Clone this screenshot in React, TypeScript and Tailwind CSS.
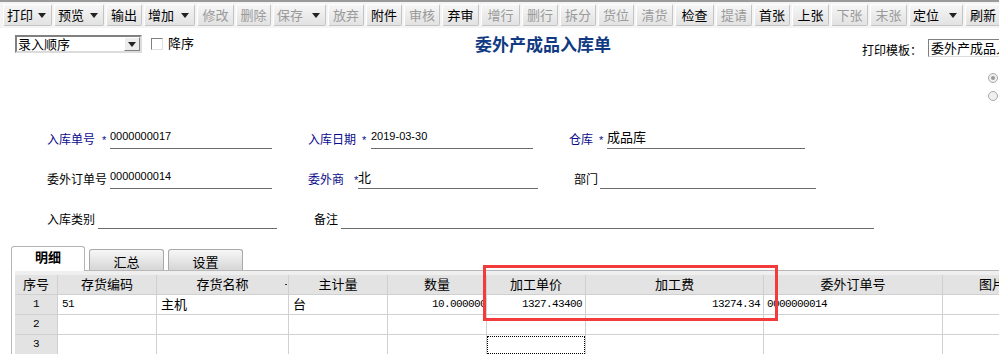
import React from 'react';

const cjk = "font-['Liberation_Sans','Noto_Sans_CJK_SC',sans-serif]";
const mono = "font-['Liberation_Mono','Noto_Sans_CJK_SC',monospace]";

type Btn = { label: string; w: string; drop?: boolean; off?: boolean };

const buttons: Btn[] = [
  { label: '打印', w: 'w-[49px]', drop: true },
  { label: '预览', w: 'w-[50px]', drop: true },
  { label: '输出', w: 'w-[36px]' },
  { label: '增加', w: 'w-[51px]', drop: true },
  { label: '修改', w: 'w-[37px]', off: true },
  { label: '删除', w: 'w-[35px]', off: true },
  { label: '保存', w: 'w-[53px]', drop: true, off: true },
  { label: '放弃', w: 'w-[36px]', off: true },
  { label: '附件', w: 'w-[36px]' },
  { label: '审核', w: 'w-[36px]', off: true },
  { label: '弃审', w: 'w-[37px]' },
  { label: '增行', w: 'w-[39px]', off: true },
  { label: '删行', w: 'w-[36px]', off: true },
  { label: '拆分', w: 'w-[36px]', off: true },
  { label: '货位', w: 'w-[36px]', off: true },
  { label: '清货', w: 'w-[37px]', off: true },
  { label: '检查', w: 'w-[39px]' },
  { label: '提请', w: 'w-[36px]', off: true },
  { label: '首张', w: 'w-[36px]' },
  { label: '上张', w: 'w-[37px]' },
  { label: '下张', w: 'w-[37px]', off: true },
  { label: '末张', w: 'w-[37px]', off: true },
  { label: '定位', w: 'w-[54px]', drop: true },
  { label: '刷新', w: 'w-[36px]' },
];

const columns = [
  { title: '序号', w: 'w-[43px]' },
  { title: '存货编码', w: 'w-[99px]' },
  { title: '存货名称', w: 'w-[132px]' },
  { title: '主计量', w: 'w-[99px]' },
  { title: '数量', w: 'w-[99px]' },
  { title: '加工单价', w: 'w-[99px]' },
  { title: '加工费', w: 'w-[178px]' },
  { title: '委外订单号', w: 'w-[179px]' },
  { title: '图片', w: 'w-[99px]' },
];

function Caret() {
  return <span className="inline-block w-0 h-0 border-l-[4px] border-r-[4px] border-t-[5px] border-l-transparent border-r-transparent border-t-[#222]" />;
}

function Toolbar() {
  return (
    <div className="h-[28px] border-t-2 border-[#9a9a9a] bg-[#f4f4f4] flex items-center pl-[3px] gap-[2px]">
      {buttons.map((b) => (
        <div
          key={b.label}
          className={`${b.w} shrink-0 h-[22px] rounded-[2px] border border-t-white border-l-white border-r-[#c4c4c4] border-b-[#c4c4c4] bg-gradient-to-b from-[#f6f6f6] to-[#e2e2e2] flex items-center ${b.drop ? 'justify-between pl-[3px] pr-[5px]' : 'justify-center'} text-[13px] leading-none ${b.off ? 'text-[#9a9a9a]' : 'text-black'}`}
        >
          <span>{b.label}</span>
          {b.drop && <Caret />}
        </div>
      ))}
    </div>
  );
}

function Header() {
  return (
    <div className="h-[81px] flex">
      <div className="w-[460px] shrink-0 pl-[15px] pt-[7px] flex items-start gap-[9px]">
        <div className="w-[127px] h-[18px] border-2 border-t-[#808080] border-l-[#808080] border-r-[#dcdcdc] border-b-[#dcdcdc] bg-white flex items-center">
          <span className="flex-1 pl-[1px] text-[13px] leading-none">录入顺序</span>
          <div className="w-[16px] h-[14px] bg-[#ececec] border border-t-white border-l-white border-r-[#808080] border-b-[#808080] flex items-center justify-center">
            <Caret />
          </div>
        </div>
        <div className="flex items-center gap-[5px] pt-[2px]">
          <div className="w-[12px] h-[12px] border border-t-[#808080] border-l-[#808080] border-r-[#e0e0e0] border-b-[#e0e0e0] bg-white" />
          <span className="text-[13px] leading-none">降序</span>
        </div>
      </div>
      <div className="w-[402px] shrink-0 pl-[15px] pt-[6px]">
        <span className="text-[17px] font-bold text-[#113a82] leading-none">委外产成品入库单</span>
      </div>
      <div className="flex-1 pt-[11px]">
        <div className="flex items-center whitespace-nowrap">
          <span className="text-[12px] leading-none pt-[5px] w-[66px] shrink-0">打印模板：</span>
          <div className="h-[18px] w-[90px] shrink-0 border border-t-[#808080] border-l-[#808080] border-r-[#dcdcdc] border-b-[#dcdcdc] bg-white text-[13px] leading-none pl-[2px] pt-[2px] overflow-hidden">
            委外产成品入库单
          </div>
        </div>
        <div className="pl-[126px] pt-[16px] flex flex-col gap-[8px]">
          <div className="w-[10px] h-[10px] rounded-full border border-[#a8a8a8] bg-[#f0f0f0] flex items-center justify-center">
            <div className="w-[4px] h-[4px] rounded-full bg-[#9a9a9a]" />
          </div>
          <div className="w-[10px] h-[10px] rounded-full border border-[#a8a8a8] bg-[#f0f0f0]" />
        </div>
      </div>
    </div>
  );
}

function Label({ text, w, blue, pl = '' }: { text: string; w: string; blue?: boolean; pl?: string }) {
  return (
    <span className={`${w} ${pl} shrink-0 text-[12px] leading-[14px] pb-[2px] ${blue ? 'text-[#0a0a8c]' : 'text-black'}`}>{text}</span>
  );
}

function Star({ w }: { w: string }) {
  return <span className={`${w} shrink-0 text-[11px] leading-[12px] pb-[3px] text-[#0a0a8c]`}>*</span>;
}

function Line({ w, value = '', zh }: { w: string; value?: string; zh?: boolean }) {
  return (
    <div className={`${w} shrink-0 h-[18px] border-b border-[#6a6a6a] flex items-start`}>
      <span className={`${zh ? 'text-[13px] leading-[14px]' : 'text-[11px] leading-[12px] -mt-[1px]'} ${cjk}`}>{value}</span>
    </div>
  );
}

function Form() {
  return (
    <div className="pl-[47px]">
      <div className="h-[40px] flex items-end">
        <div className="w-[261px] shrink-0 flex items-end">
          <Label text="入库单号" w="w-[55px]" blue />
          <Star w="w-[8px]" />
          <Line w="w-[162px]" value="0000000017" />
        </div>
        <div className="w-[261px] shrink-0 flex items-end">
          <Label text="入库日期" w="w-[54px]" blue />
          <Star w="w-[9px]" />
          <Line w="w-[162px]" value="2019-03-30" />
        </div>
        <div className="flex items-end">
          <Label text="仓库" w="w-[30px]" blue />
          <Star w="w-[8px]" />
          <Line w="w-[198px]" value="成品库" zh />
        </div>
      </div>
      <div className="h-[40px] flex items-end">
        <div className="w-[261px] shrink-0 flex items-end">
          <Label text="委外订单号" w="w-[63px]" />
          <Line w="w-[162px]" value="0000000014" />
        </div>
        <div className="w-[261px] shrink-0 flex items-end">
          <Label text="委外商" w="w-[46px]" blue />
          <Star w="w-[4px]" />
          <Line w="w-[180px]" value="北" zh />
        </div>
        <div className="flex items-end pl-[5px]">
          <Label text="部门" w="w-[26px]" />
          <Line w="w-[216px]" />
        </div>
      </div>
      <div className="h-[40px] flex items-end">
        <div className="w-[261px] shrink-0 flex items-end">
          <Label text="入库类别" w="w-[51px]" />
          <Line w="w-[179px]" />
        </div>
        <div className="flex items-end pl-[6px]">
          <Label text="备注" w="w-[27px]" />
          <Line w="w-[533px]" />
        </div>
      </div>
    </div>
  );
}

function Tabs() {
  return (
    <div className="mt-[17px] pl-[11px] h-[24px] flex items-end gap-[4px]">
      <div className="relative z-10 w-[74px] h-[25px] -mb-[1px] rounded-t-[3px] border border-b-0 border-[#b4b4b4] bg-white flex items-center justify-center pb-[4px]">
        <span className="text-[13px] font-bold leading-none">明细</span>
      </div>
      {['汇总', '设置'].map((t) => (
        <div
          key={t}
          className="w-[75px] h-[21px] rounded-t-[3px] border border-b-0 border-[#a8a8a8] bg-gradient-to-b from-[#f7f7f7] to-[#d6d6d6] flex items-end justify-center pb-[1px]"
        >
          <span className="text-[13px] leading-none">{t}</span>
        </div>
      ))}
    </div>
  );
}

type Row = { no: string; cells: React.ReactNode[] };

const num = `text-[11px] tracking-[-0.6px] ${mono}`;

function Grid() {
  const rows: Row[] = [
    {
      no: '1',
      cells: [
        <span className={`pl-[4px] ${num}`}>51</span>,
        <span className="pl-[4px] text-[13px]">主机</span>,
        <span className="pl-[4px] text-[13px]">台</span>,
        <span className={`w-full text-right mr-[-4px] ${num}`}>10.000000</span>,
        <span className={`w-full text-right pr-[3px] ${num}`}>1327.43400</span>,
        <span className={`w-full text-right pr-[3px] ${num}`}>13274.34</span>,
        <span className={`pl-[3px] ${num}`}>0000000014</span>,
        null,
      ],
    },
    { no: '2', cells: [null, null, null, null, null, null, null, null] },
    {
      no: '3',
      cells: [null, null, null, null, <div className="w-full h-[18px] border border-dotted border-black" />, null, null, null],
    },
  ];

  return (
    <div className="border-t border-l border-[#b8b8b8] ml-[11px] pl-[3px]">
      <div className="h-[4px] bg-[#efefef]" />
      <div className="flex h-[20px] border-b border-[#d0d0d0] bg-[#e3e3e3]">
        {columns.map((c, i) => (
          <div key={c.title} className={`relative ${c.w} shrink-0 border-r border-[#d0d0d0] flex items-center justify-center text-[13px] leading-none`}>
            {c.title}
            {i === 2 && <span className="absolute right-[1px] top-[9px] w-[2px] h-[1px] bg-[#333]" />}
          </div>
        ))}
      </div>
      {rows.map((r) => (
        <div key={r.no} className="flex h-[20px] border-b border-[#d0d0d0]">
          <div className={`${columns[0].w} shrink-0 bg-[#e3e3e3] border-r border-[#d0d0d0] flex items-center justify-center ${num}`}>
            {r.no}
          </div>
          {r.cells.map((cell, i) => (
            <div
              key={i}
              className={`${columns[i + 1].w} shrink-0 border-r border-[#d0d0d0] flex items-center overflow-hidden whitespace-nowrap leading-none`}
            >
              {cell}
            </div>
          ))}
        </div>
      ))}
    </div>
  );
}

export default function App() {
  return (
    <div className={`relative w-[999px] h-[354px] overflow-hidden bg-white text-black ${cjk}`}>
      <Toolbar />
      <Header />
      <Form />
      <Tabs />
      <Grid />
      {/* red annotation box */}
      <div className="absolute left-[483px] top-[265px] w-[295px] h-[56px] border-[3px] border-[#f43b3b]" />
    </div>
  );
}
